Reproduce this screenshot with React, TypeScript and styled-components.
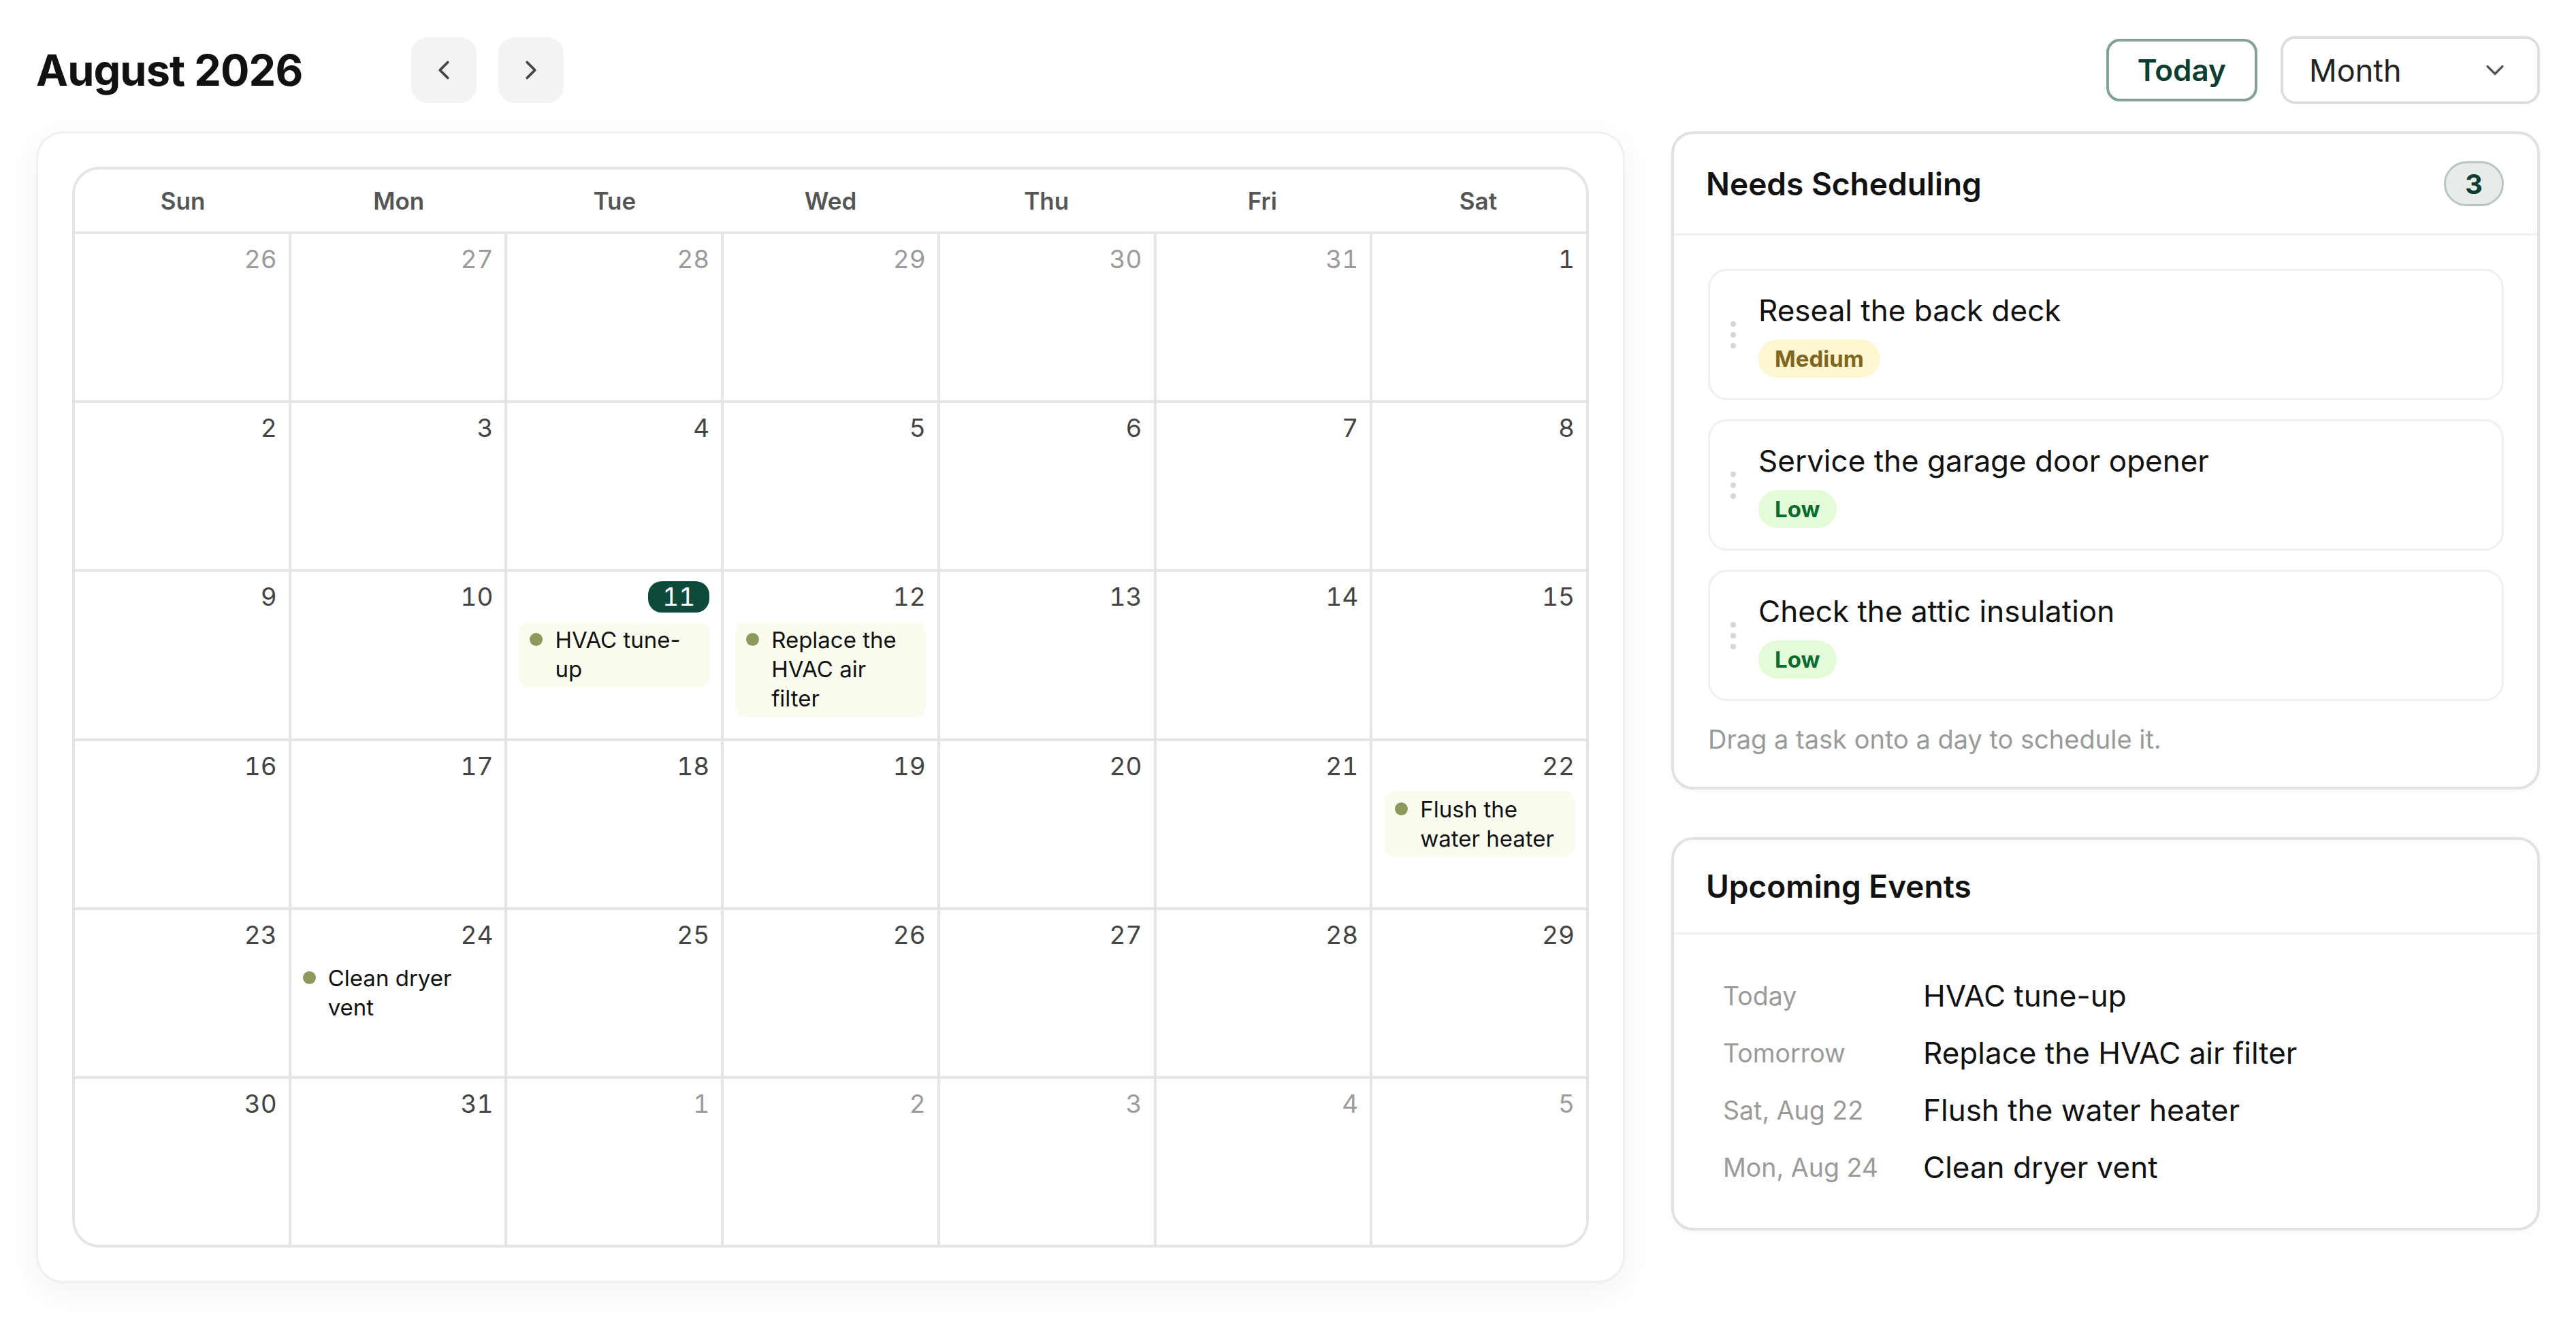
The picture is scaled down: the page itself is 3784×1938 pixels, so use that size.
import React from "react";
import styled, { createGlobalStyle } from "styled-components";
import { ChevronLeft, ChevronRight, ChevronDown } from "lucide-react";

const GlobalStyle = createGlobalStyle`
  * { box-sizing: border-box; }
  html, body { margin: 0; padding: 0; background: #ffffff; }
  body {
    font-family: Inter, "Noto Sans", "Liberation Sans", sans-serif;
    color: #111111;
    -webkit-font-smoothing: antialiased;
  }
`;

const Page = styled.div`
  height: 100vh;
  padding: 53px;
  display: flex;
  flex-direction: column;
  gap: 40px;
`;

const TopBar = styled.header`
  height: 100px;
  display: flex;
  align-items: center;
  justify-content: space-between;
  flex-shrink: 0;
`;

const TitleGroup = styled.div`
  display: flex;
  align-items: center;
  gap: 32px;
`;

const MonthTitle = styled.h1`
  margin: 0;
  min-width: 519px;
  font-size: 63px;
  font-weight: 700;
  letter-spacing: -0.9px;
  color: #111111;
`;

const NavButton = styled.button`
  width: 96px;
  height: 96px;
  border: none;
  border-radius: 24px;
  background: #f2f4f3;
  color: #444444;
  display: flex;
  align-items: center;
  justify-content: center;
  padding: 0;
  cursor: pointer;
`;

const Controls = styled.div`
  display: flex;
  align-items: center;
  gap: 34px;
`;

const TodayButton = styled.button`
  height: 92px;
  padding: 0 42px;
  border: 4px solid #84a199;
  border-radius: 20px;
  background: #ffffff;
  color: #0b3d30;
  font-family: inherit;
  font-size: 44px;
  font-weight: 600;
  cursor: pointer;
`;

const ViewSelect = styled.div`
  width: 381px;
  height: 100px;
  padding: 0 40px 0 38px;
  border: 4px solid #dcdedd;
  border-radius: 22px;
  display: flex;
  align-items: center;
  justify-content: space-between;
  font-size: 45px;
  color: #222222;
  svg { color: #555555; }
`;

const Main = styled.div`
  flex: 1;
  min-height: 0;
  display: grid;
  grid-template-columns: 1fr 1276px;
  gap: 68px;
`;

const CalendarCard = styled.section`
  border: 3px solid #eef0ef;
  border-radius: 40px;
  padding: 49px 50px;
  background: #ffffff;
  box-shadow: 0 12px 40px rgba(30, 50, 40, 0.06);
  display: flex;
  min-height: 0;
`;

const MonthGrid = styled.div`
  flex: 1;
  border: 4px solid #e5e5e5;
  border-radius: 40px;
  overflow: hidden;
  display: flex;
  flex-direction: column;
`;

const WeekHeader = styled.div`
  height: 95px;
  flex-shrink: 0;
  display: grid;
  grid-template-columns: repeat(7, 1fr);
  border-bottom: 4px solid #e5e5e5;
`;

const WeekdayLabel = styled.div`
  display: flex;
  align-items: center;
  justify-content: center;
  font-size: 35px;
  font-weight: 600;
  color: #555555;
`;

const DaysGrid = styled.div`
  flex: 1;
  display: grid;
  grid-template-columns: repeat(7, 1fr);
  grid-template-rows: repeat(6, 1fr);
  gap: 4px;
  background: #e5e5e5;
`;

const DayCell = styled.div`
  background: #ffffff;
  padding: 14px 17px;
  display: flex;
  flex-direction: column;
  min-height: 0;
  overflow: hidden;
`;

const DayNumber = styled.span<{ $muted?: boolean; $today?: boolean }>`
  align-self: flex-end;
  font-size: 37px;
  line-height: 46px;
  font-variant-numeric: tabular-nums;
  padding: ${(p) => (p.$today ? "0 21px" : "0")};
  border-radius: 20px;
  background: ${(p) => (p.$today ? "#0e4a3c" : "transparent")};
  color: ${(p) => (p.$today ? "#ffffff" : p.$muted ? "#9b9b9b" : "#444444")};
`;

const EventChip = styled.div<{ $plain?: boolean }>`
  margin-top: 13px;
  display: flex;
  align-items: flex-start;
  gap: 18px;
  padding: ${(p) => (p.$plain ? "6px 0" : "6px 16px")};
  border-radius: 16px;
  background: ${(p) => (p.$plain ? "transparent" : "#f9fcee")};
  font-size: 33px;
  line-height: 43px;
  color: #111111;
`;

const EventDot = styled.span`
  width: 19px;
  height: 19px;
  flex-shrink: 0;
  margin-top: 11px;
  border-radius: 50%;
  background: #8b9a5a;
`;

const Sidebar = styled.aside`
  display: flex;
  flex-direction: column;
  gap: 70px;
  align-self: start;
`;

const Panel = styled.section`
  border: 4px solid #e0e2e1;
  border-radius: 32px;
  background: #ffffff;
  box-shadow: 0 3px 8px rgba(0, 0, 0, 0.03);
`;

const PanelHeader = styled.div`
  display: flex;
  align-items: center;
  justify-content: space-between;
  padding: 40px 49px 40px 47px;
  border-bottom: 3px solid #f1f2f1;
`;

const PanelTitle = styled.h2`
  margin: 0;
  font-size: 46px;
  line-height: 56px;
  font-weight: 600;
  color: #111111;
`;

const CountBadge = styled.span`
  min-width: 88px;
  height: 66px;
  padding: 0 26px;
  border-radius: 33px;
  border: 3px solid #b8c6c1;
  background: #e7ecea;
  color: #0b3d30;
  font-size: 40px;
  font-weight: 700;
  display: flex;
  align-items: center;
  justify-content: center;
`;

const TaskBody = styled.div`
  padding: 49px 49px 45px 50px;
  display: flex;
  flex-direction: column;
  gap: 28px;
`;

const TaskCard = styled.div`
  border: 3px solid #eff1f0;
  border-radius: 28px;
  padding: 30px 30px;
  display: flex;
  align-items: center;
  gap: 33px;
`;

const DragHandle = styled.div`
  display: flex;
  flex-direction: column;
  gap: 8px;
  span {
    width: 8px;
    height: 8px;
    border-radius: 50%;
    background: #d6d6d6;
  }
`;

const TaskInfo = styled.div`
  display: flex;
  flex-direction: column;
  align-items: flex-start;
  gap: 14px;
`;

const TaskTitle = styled.div`
  font-size: 44px;
  line-height: 57px;
  color: #111111;
`;

const PriorityTag = styled.span<{ $level: "Medium" | "Low" }>`
  height: 56px;
  padding: 0 24px;
  border-radius: 28px;
  display: inline-flex;
  align-items: center;
  font-size: 33px;
  font-weight: 700;
  background: ${(p) => (p.$level === "Medium" ? "#fdf7d2" : "#e3fcd7")};
  color: ${(p) => (p.$level === "Medium" ? "#7f661c" : "#0b6b2e")};
`;

const Hint = styled.p`
  margin: 3px 0 0;
  font-size: 38px;
  line-height: 50px;
  color: #9a9a9a;
`;

const UpcomingBody = styled.div`
  padding: 48px 49px 47px 50px;
`;

const UpcomingRow = styled.div`
  display: grid;
  grid-template-columns: 294px 1fr;
  align-items: center;
  height: 84px;
  padding: 0 22px;
`;

const UpcomingWhen = styled.span`
  font-size: 37.5px;
  color: #9a9a9a;
`;

const UpcomingWhat = styled.span`
  font-size: 44px;
  color: #111111;
`;

type CalendarEvent = { title: string; plain?: boolean };
type Day = { n: number; muted?: boolean; today?: boolean; event?: CalendarEvent };

const weekdays = ["Sun", "Mon", "Tue", "Wed", "Thu", "Fri", "Sat"];

const events: Record<number, CalendarEvent> = {
  11: { title: "HVAC tune-up" },
  12: { title: "Replace the HVAC air filter" },
  22: { title: "Flush the water heater" },
  24: { title: "Clean dryer vent", plain: true },
};

const buildDays = (): Day[] => {
  const days: Day[] = [];
  for (let n = 26; n <= 31; n++) days.push({ n, muted: true });
  for (let n = 1; n <= 31; n++) days.push({ n, today: n === 11, event: events[n] });
  for (let n = 1; n <= 5; n++) days.push({ n, muted: true });
  return days;
};

const tasks: { title: string; level: "Medium" | "Low" }[] = [
  { title: "Reseal the back deck", level: "Medium" },
  { title: "Service the garage door opener", level: "Low" },
  { title: "Check the attic insulation", level: "Low" },
];

const upcoming = [
  { when: "Today", what: "HVAC tune-up" },
  { when: "Tomorrow", what: "Replace the HVAC air filter" },
  { when: "Sat, Aug 22", what: "Flush the water heater" },
  { when: "Mon, Aug 24", what: "Clean dryer vent" },
];

export default function App() {
  const days = buildDays();
  return (
    <>
      <GlobalStyle />
      <Page>
        <TopBar>
          <TitleGroup>
            <MonthTitle>August 2026</MonthTitle>
            <NavButton aria-label="Previous month">
              <ChevronLeft size={46} strokeWidth={2} />
            </NavButton>
            <NavButton aria-label="Next month">
              <ChevronRight size={46} strokeWidth={2} />
            </NavButton>
          </TitleGroup>
          <Controls>
            <TodayButton>Today</TodayButton>
            <ViewSelect>
              <span>Month</span>
              <ChevronDown size={44} strokeWidth={1.8} />
            </ViewSelect>
          </Controls>
        </TopBar>

        <Main>
          <CalendarCard>
            <MonthGrid>
              <WeekHeader>
                {weekdays.map((d) => (
                  <WeekdayLabel key={d}>{d}</WeekdayLabel>
                ))}
              </WeekHeader>
              <DaysGrid>
                {days.map((d, i) => (
                  <DayCell key={i}>
                    <DayNumber $muted={d.muted} $today={d.today}>
                      {d.n}
                    </DayNumber>
                    {d.event && (
                      <EventChip $plain={d.event.plain}>
                        <EventDot />
                        <span>{d.event.title}</span>
                      </EventChip>
                    )}
                  </DayCell>
                ))}
              </DaysGrid>
            </MonthGrid>
          </CalendarCard>

          <Sidebar>
            <Panel>
              <PanelHeader>
                <PanelTitle>Needs Scheduling</PanelTitle>
                <CountBadge>3</CountBadge>
              </PanelHeader>
              <TaskBody>
                {tasks.map((t) => (
                  <TaskCard key={t.title}>
                    <DragHandle>
                      <span />
                      <span />
                      <span />
                    </DragHandle>
                    <TaskInfo>
                      <TaskTitle>{t.title}</TaskTitle>
                      <PriorityTag $level={t.level}>{t.level}</PriorityTag>
                    </TaskInfo>
                  </TaskCard>
                ))}
                <Hint>Drag a task onto a day to schedule it.</Hint>
              </TaskBody>
            </Panel>

            <Panel>
              <PanelHeader>
                <PanelTitle>Upcoming Events</PanelTitle>
              </PanelHeader>
              <UpcomingBody>
                {upcoming.map((u) => (
                  <UpcomingRow key={u.when}>
                    <UpcomingWhen>{u.when}</UpcomingWhen>
                    <UpcomingWhat>{u.what}</UpcomingWhat>
                  </UpcomingRow>
                ))}
              </UpcomingBody>
            </Panel>
          </Sidebar>
        </Main>
      </Page>
    </>
  );
}
